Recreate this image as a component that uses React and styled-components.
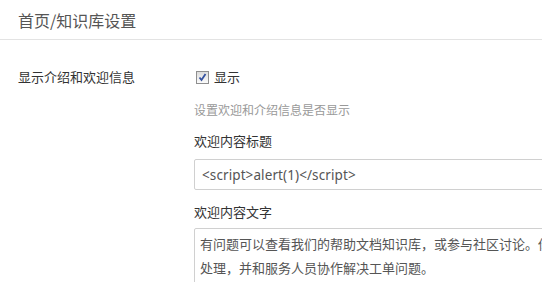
import React from "react";
import styled, { createGlobalStyle } from "styled-components";

const Global = createGlobalStyle`
  html, body { margin: 0; padding: 0; background: #fff; }
  body {
    font-family: "Noto Sans CJK SC", "Noto Sans", sans-serif;
    color: #333;
    overflow: hidden;
  }
`;

const Page = styled.div`
  width: 542px;
  height: 282px;
  overflow: hidden;
`;

const Header = styled.div`
  height: 39px;
  border-bottom: 1px solid #e3e3e3;
  display: flex;
  align-items: center;
  padding-left: 18px;
`;

const Title = styled.h1`
  margin: 0;
  font-size: 16px;
  font-weight: normal;
  color: #555;
  line-height: 20px;
`;

const Form = styled.div`
  display: grid;
  grid-template-columns: 176px 600px;
  padding: 27px 0 0 18px;
`;

const Label = styled.div`
  font-size: 13px;
  line-height: 20px;
  color: #333;
`;

const Controls = styled.div`
  display: flex;
  flex-direction: column;
`;

const CheckRow = styled.label`
  display: flex;
  align-items: center;
  gap: 5px;
  padding-left: 2px;
  font-size: 13px;
  line-height: 20px;
  color: #333;
`;

const Box = styled.span`
  width: 11px;
  height: 11px;
  border: 1px solid #8f8f8f;
  background: linear-gradient(#dcdcdc, #fbfbfb);
  display: flex;
  align-items: center;
  justify-content: center;
`;

const Help = styled.div`
  margin-top: 13px;
  font-size: 12px;
  line-height: 20px;
  color: #999;
`;

const FieldLabel = styled.div`
  margin-top: ${(p) => p.$mt}px;
  font-size: 13px;
  line-height: 20px;
  color: #333;
`;

const Input = styled.div`
  margin-top: 8px;
  height: 29px;
  border: 1px solid #d0d0d0;
  border-radius: 2px;
  padding-left: 7px;
  display: flex;
  align-items: center;
  font-family: "Noto Sans", "Noto Sans CJK SC", sans-serif;
  font-size: 13.5px;
  letter-spacing: 0.1px;
  color: #555;
  white-space: nowrap;
`;

const TextBox = styled.div`
  margin-top: 6px;
  height: 80px;
  border: 1px solid #d0d0d0;
  border-radius: 2px;
  padding: 3px 5px;
  font-size: 13px;
  line-height: 24px;
  color: #555;
  white-space: nowrap;
`;

export default function App() {
  return (
    <Page>
      <Global />
      <Header>
        <Title>首页/知识库设置</Title>
      </Header>
      <Form>
        <Label>显示介绍和欢迎信息</Label>
        <Controls>
          <CheckRow>
            <Box>
              <svg width="9" height="9" viewBox="0 0 9 9">
                <path d="M1.5 4.5 L3.5 7 L7.5 1" fill="none" stroke="#3552a0" strokeWidth="1.8" />
              </svg>
            </Box>
            显示
          </CheckRow>
          <Help>设置欢迎和介绍信息是否显示</Help>
          <FieldLabel $mt={11}>欢迎内容标题</FieldLabel>
          <Input>{"<script>alert(1)</script>"}</Input>
          <FieldLabel $mt={12}>欢迎内容文字</FieldLabel>
          <TextBox>
            有问题可以查看我们的帮助文档知识库，或参与社区讨论。你也可以提交工单，我们会尽快
            <br />
            处理，并和服务人员协作解决工单问题。
          </TextBox>
        </Controls>
      </Form>
    </Page>
  );
}
